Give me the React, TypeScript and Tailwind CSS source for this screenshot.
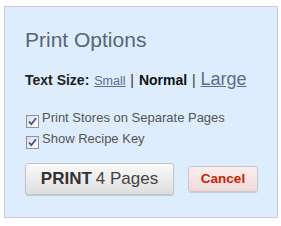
import React from "react";

function Check() {
  return (
    <svg width="13" height="13" viewBox="0 0 13 13" className="shrink-0 mt-[8px]">
      <defs>
        <linearGradient id="cbg" x1="0" y1="0" x2="1" y2="1">
          <stop offset="0" stopColor="#dcdcdc" />
          <stop offset="1" stopColor="#ffffff" />
        </linearGradient>
      </defs>
      <rect x="0.5" y="0.5" width="12" height="12" fill="url(#cbg)" stroke="#8f9399" />
      <path d="M3 6.5 L5.3 9.2 L10 3.2" fill="none" stroke="#3c4f9a" strokeWidth="1.8" />
    </svg>
  );
}

export default function App() {
  return (
    <div
      className="w-[281px] h-[226px] bg-white pt-[6px] pl-[4px]"
      style={{ fontFamily: '"Liberation Sans", Arial, sans-serif' }}
    >
      <div className="w-[274px] h-[212px] border border-[#c3ccd6] bg-[#ddedfd] pl-[20px] pt-[21px]">
        <div className="text-[21px] leading-[24px] text-[#5a6476]">Print Options</div>
        <div className="mt-[15px] text-[14px] leading-[24px] text-[#222]">
          <span className="font-bold">Text Size:</span>{" "}
          <span className="ml-[1px] text-[12.5px] underline text-[#5d6d8c]">Small</span>{" "}
          <span className="mx-[1px] text-[#333]">|</span>{" "}
          <span className="font-bold text-[#111]">Normal</span>{" "}
          <span className="mx-[1px] text-[#333]">|</span>{" "}
          <span className="text-[18px] underline text-[#5d6d8c]">Large</span>
        </div>
        <div className="mt-[14px] flex flex-col">
          <div className="flex h-[21px] items-start gap-[3px] pl-[1px]">
            <Check />
            <span className="text-[13px] leading-[21px] text-[#555]">Print Stores on Separate Pages</span>
          </div>
          <div className="flex h-[21px] items-start gap-[3px] pl-[1px]">
            <Check />
            <span className="text-[13px] leading-[21px] text-[#555]">Show Recipe Key</span>
          </div>
        </div>
        <div className="mt-[14px] flex items-center gap-[14px]">
          <div className="w-[149px] h-[32px] rounded-[3px] border border-[#c4c4c4] bg-gradient-to-b from-[#fafafa] to-[#dedede] shadow-[0_1px_1px_rgba(0,0,0,0.15)] flex items-center justify-center text-[17px] text-[#444]">
            <span className="font-bold text-[#333]">PRINT</span>
            <span className="ml-[4px]">4 Pages</span>
          </div>
          <div className="w-[70px] h-[26px] rounded-[3px] border border-[#d0c8c8] bg-gradient-to-b from-[#fbeeee] to-[#efdada] shadow-[0_1px_1px_rgba(0,0,0,0.12)] flex items-center justify-center text-[13.5px] font-bold text-[#cc2200]">
            Cancel
          </div>
        </div>
      </div>
    </div>
  );
}
